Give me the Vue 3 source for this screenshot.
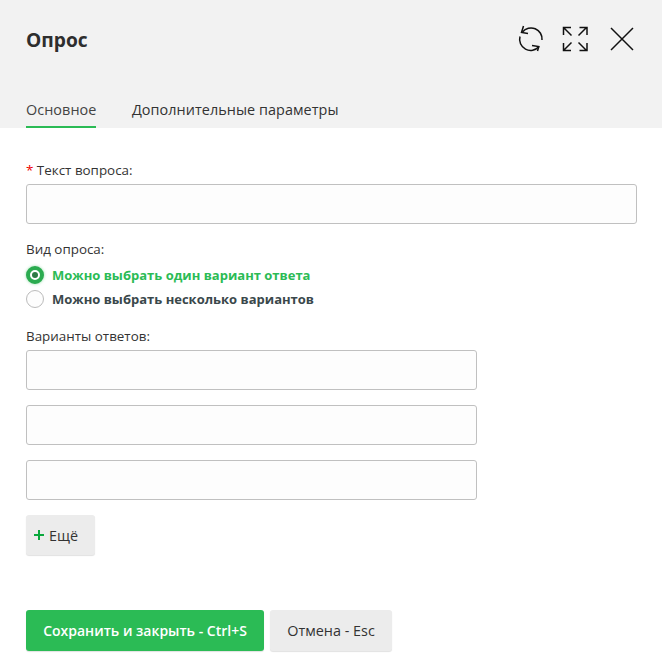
<script setup>
const answers = [1, 2, 3]
</script>

<template>
  <div class="page">
    <header class="head">
      <div class="top">
        <h1 class="title">Опрос</h1>
        <div class="icons">
          <svg width="26" height="27" viewBox="0 0 26 27" fill="none" stroke="#111" stroke-width="1.5">
            <path d="M4.500 7A11 11 0 0 1 24 15" />
            <path d="M5.500 1L3.500 7.500L10 8.500" />
            <path d="M2 11.500A11 11 0 0 0 21 21.500" />
            <path d="M14 20.500L20.800 21.500L19.500 26" />
          </svg>
          <svg class="ic2" width="26" height="26" viewBox="0 0 26 26" fill="none" stroke="#111" stroke-width="1.5">
            <path d="M1.500 9V1.500H9M1.500 1.500L9.500 9.500" />
            <path d="M25 9V1.500H17.500M24.500 1.500L16.500 9.500" />
            <path d="M1.500 17V24.500H9M1.500 24.500L9.500 16.500" />
            <path d="M25 17V24.500H17.500M24.500 24.500L16.500 16.500" />
          </svg>
          <svg class="ic3" width="24" height="24" viewBox="0 0 24 24" fill="none" stroke="#111" stroke-width="1.5">
            <path d="M1 1L23 23M23 1L1 23" />
          </svg>
        </div>
      </div>
      <nav class="tabs">
        <span class="tab active">Основное</span>
        <span class="tab">Дополнительные параметры</span>
      </nav>
    </header>
    <main class="body">
      <label class="label"><span class="req">*</span> Текст вопроса:</label>
      <div class="input full"></div>
      <div class="label kind">Вид опроса:</div>
      <div class="radio on"><span class="dot"></span>Можно выбрать один вариант ответа</div>
      <div class="radio"><span class="dot"></span>Можно выбрать несколько вариантов</div>
      <div class="label vars">Варианты ответов:</div>
      <div class="answers">
        <div v-for="a in answers" :key="a" class="input short"></div>
      </div>
      <button class="btn more">
        <svg width="10" height="10" viewBox="0 0 10 10"><path d="M0 5H10M5 0V10" stroke="#0aa83c" stroke-width="2" /></svg>
        Ещё
      </button>
      <div class="actions">
        <button class="btn save">Сохранить и закрыть - Ctrl+S</button>
        <button class="btn cancel">Отмена - Esc</button>
      </div>
    </main>
  </div>
</template>

<style>
html, body { margin: 0; background: #fff; }
</style>

<style scoped>
.page {
  width: 662px;
  height: 668px;
  overflow: hidden;
  font-family: "Open Sans", sans-serif;
  color: #333;
}
.head { background: #f2f2f2; height: 128px; padding: 0 26px; box-sizing: border-box; display: flex; flex-direction: column; }
.top { height: 90px; display: flex; justify-content: space-between; align-items: flex-start; }
.title { margin: 26px 0 0; font-size: 19.2px; line-height: 28px; font-weight: 700; color: #2e2e2e; }
.icons { display: flex; align-items: center; margin-top: 25px; margin-right: 2px; }
.ic2 { margin-left: 18px; }
.ic3 { margin-left: 22px; }
.tabs { display: flex; gap: 35.500px; }
.tab { font-size: 14.4px; line-height: 20px; height: 30px; box-sizing: border-box; padding-top: 10px; letter-spacing: 0.06px; color: #333; }
.tab.active { border-bottom: 2px solid #2bbb55; height: 38px; color: #444; }
.body { padding: 0 26px; }
.label { display: block; font-size: 13.4px; line-height: 18px; color: #333; }
.body > .label:first-child { margin-top: 33px; }
.req { color: #e00; }
.input { height: 40px; box-sizing: border-box; background: #fdfdfd; border: 1px solid #c0c0c0; border-radius: 3px; }
.full { width: 611px; margin-top: 5px; }
.short { width: 451px; }
.kind { margin-top: 16px; }
.radio { display: flex; align-items: center; gap: 8px; height: 24px; font-size: 13px; font-weight: 700; color: #3a484b; }
.radio.on { color: #2bbb55; margin-top: 5px; }
.dot { width: 18px; height: 18px; box-sizing: border-box; border-radius: 50%; border: 1px solid #bbb; background: #fdfdfd; }
.radio.on .dot { border: 4px solid #2bab50; background: #fff; position: relative; box-shadow: 0 0 3px rgba(43,187,85,.5); }
.radio.on .dot::after { content: ""; position: absolute; inset: 2px; border-radius: 50%; background: #2d7a45; }
.vars { margin-top: 16px; }
.answers { display: flex; flex-direction: column; gap: 15px; margin-top: 5px; }
.btn { border: 0; border-radius: 3px; font-family: inherit; font-size: 14px; box-shadow: 0 1px 1px rgba(0,0,0,.12); }
.more { display: flex; align-items: center; margin-top: 15px; width: 69px; height: 40px; padding: 0 0 0 8px; background: #ececec; color: #333; gap: 5px; font-size: 14.4px; }
.actions { display: flex; gap: 6px; margin-top: 55px; }
.save { width: 238px; height: 41px; background: #2bbb55; color: #fff; font-weight: 600; }
.cancel { width: 122px; height: 41px; background: #ececec; color: #333; font-size: 14.4px; }
</style>
